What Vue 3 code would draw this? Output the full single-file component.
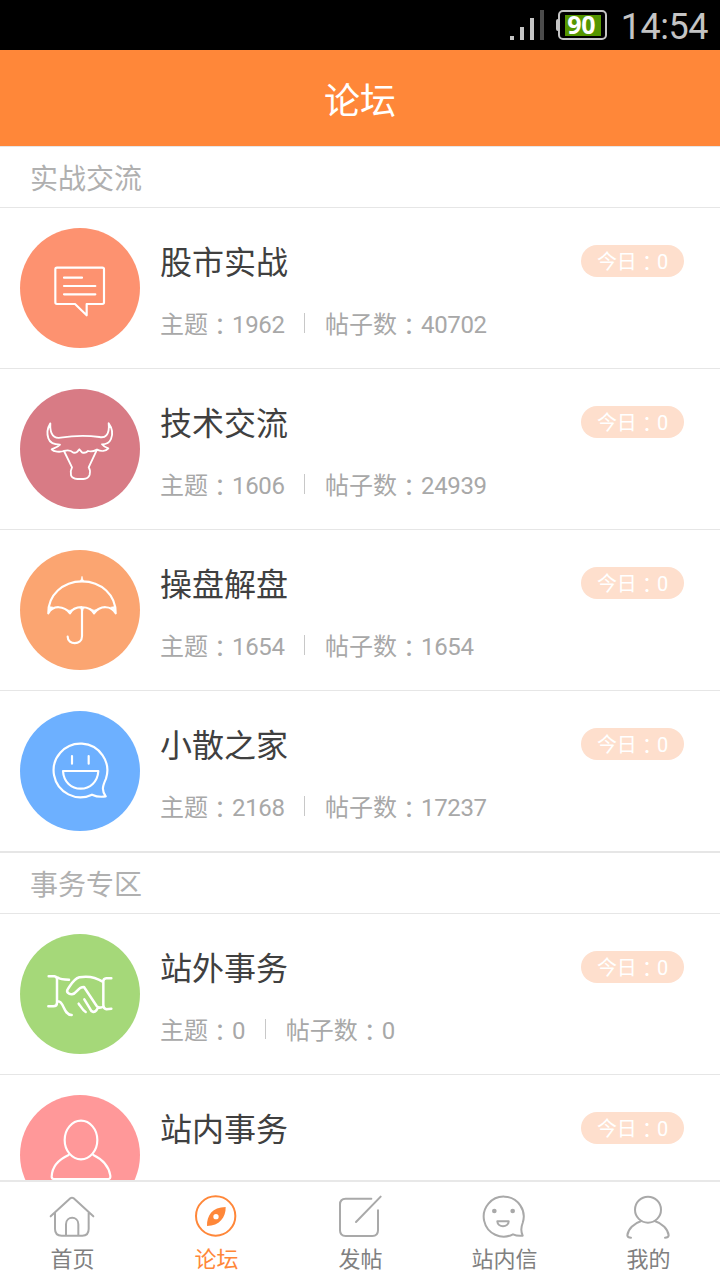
<script setup>
const sections = [
  {
    title: '实战交流',
    items: [
      { name: '股市实战', icon: 'talk', color: '#fd9270', topics: 1962, posts: 40702 },
      { name: '技术交流', icon: 'bull', color: '#d87b85', topics: 1606, posts: 24939 },
      { name: '操盘解盘', icon: 'umbrella', color: '#fba571', topics: 1654, posts: 1654 },
      { name: '小散之家', icon: 'smile', color: '#6db0ff', topics: 2168, posts: 17237 },
    ],
  },
  {
    title: '事务专区',
    items: [
      { name: '站外事务', icon: 'hands', color: '#a5d879', topics: 0, posts: 0 },
      { name: '站内事务', icon: 'person', color: '#ff9899' },
    ],
  },
]
const tabs = [
  { label: '首页', icon: 'home' },
  { label: '论坛', icon: 'forum', active: true },
  { label: '发帖', icon: 'post' },
  { label: '站内信', icon: 'mail' },
  { label: '我的', icon: 'me' },
]
</script>

<template>
  <div class="screen">
    <div class="status">
      <svg class="signal" viewBox="0 0 36 32" width="36" height="32">
        <g fill="#c4c4c4">
          <rect x="0" y="27" width="4" height="4" />
          <rect x="10" y="18" width="4" height="13" />
          <rect x="20" y="9" width="4" height="22" />
        </g>
        <rect x="30" y="1" width="4" height="30" fill="#4c4c4c" />
      </svg>
      <div class="battery"><span class="level">90</span></div>
      <span class="time">14:54</span>
    </div>

    <header class="header">论坛</header>

    <main class="list">
      <section v-for="s in sections" :key="s.title" class="section">
        <h2 class="section-title">{{ s.title }}</h2>
        <article v-for="it in s.items" :key="it.name" class="item">
          <div class="avatar" :style="{ background: it.color }">
            <svg v-if="it.icon === 'talk'" viewBox="30 24 360 360">
              <path d="M141 143H277Q282 143 282 148V247Q282 252 277 252H230V286L195 252H141Q136 252 136 247V148Q136 143 141 143ZM162 173H216M162 198H256M162 223H256" />
            </svg>
            <svg v-else-if="it.icon === 'bull'" viewBox="30 27 360 360" class="thin">
              <path d="M121 130C110 148 112 166 115 175C119 188 133 194 150 194C142 203 134 204 125 208C131 216 150 217 162 213L186 262C182 269 181 276 183 286Q186 296 202 297H220Q235 296 239 284C241 275 241 269 236 262L261 209C273 215 287 214 295 205C288 203 281 200 276 193C289 193 299 187 303 177C309 162 307 145 296 130C298 147 297 157 289 166Q282 174 268 171C230 166 190 167 152 173C138 175 129 169 125 160Q120 150 121 130Z" />
              <path d="M162 213C172 210 182 210 190 218Q196 219 202 215L208 208L216 217Q225 221 234 213Q246 217 261 209" />
            </svg>
            <svg v-else-if="it.icon === 'umbrella'" viewBox="30 30 360 360">
              <path d="M115 220C114 166 158 124 216 124S318 166 317 220C304 196 270 195 252 220C240 196 192 195 180 220C162 196 128 195 115 220ZM216 203V289C216 316 173 316 173 290" />
              <path class="solid" d="M210 124Q215 119 216 109Q217 119 222 124ZM115 220L119 200Q125 200 130 202Q120 207 115 220ZM317 220L313 200Q307 200 302 202Q312 207 317 220ZM180 220L168 207Q179 216 192 206ZM252 220L240 206Q252 215 264 207ZM216 216L212 204H220Z" />
            </svg>
            <svg v-else-if="it.icon === 'smile'" viewBox="30 33 360 360">
              <path d="M246 284A80.500 80.500 0 1 1 288 236C278 258 274 270 287 289Q266 293 246 284ZM186 168V191M236 168V191M159 213H265C263 246 240 266 212 266S161 246 159 213Z" />
            </svg>
            <svg v-else-if="it.icon === 'hands'" viewBox="30 27 360 360" class="bold">
              <path d="M116 154H133Q141 155 141 163V233Q141 244 130 244H115M144 158Q151 164 177 164M144 229C162 228 159 269 185 270M304 160H289Q280 161 280 169V240Q280 251 289 253L304 251M278 170C256 156 230 153 208 157C192 161 184 177 173 193C168 201 176 209 186 208C201 206 203 185 222 186L260 243Q265 250 275 247M206 236C212 244 217 255 227 261M223 223L240 251C244 261 252 264 259 256L264 248" />
            </svg>
            <svg v-else viewBox="30 30 360 360">
              <ellipse cx="213" cy="165" rx="49" ry="58" />
              <path d="M176 210C145 224 126 246 125 275Q125 282 133 282H295Q302 282 301 272C297 246 279 224 250 210" />
            </svg>
          </div>
          <div class="info">
            <div class="row">
              <h3 class="name">{{ it.name }}</h3>
              <span class="badge">今日<i class="colon">：</i>0</span>
            </div>
            <div v-if="it.topics !== undefined" class="meta">
              <span>主题<i class="colon">：</i><span class="num">{{ it.topics }}</span></span>
              <span class="bar"></span>
              <span>帖子数<i class="colon">：</i><span class="num">{{ it.posts }}</span></span>
            </div>
          </div>
        </article>
      </section>
    </main>

    <nav class="tabs">
      <div v-for="t in tabs" :key="t.icon" class="tab" :class="{ active: t.active }">
        <svg v-if="t.icon === 'home'" viewBox="144 66 144 144">
          <path d="M152 139L211 85Q216 81 221 85L280 139M165 128V177Q165 197 185 197H247Q266 197 266 177V128M198 197V163C198 137 235 137 235 163V197" />
        </svg>
        <svg v-else-if="t.icon === 'forum'" viewBox="576 66 144 144">
          <circle cx="647" cy="138" r="59" />
          <path class="fill" fill-rule="evenodd" d="M621 168C620 137 637 111 677 111C678 142 658 168 621 168ZM648 132A8 8 0 1 0 648 148A8 8 0 1 0 648 132Z" />
        </svg>
        <svg v-else-if="t.icon === 'post'" viewBox="1008 66 144 144">
          <path d="M1114 86H1037Q1020 86 1020 103V181Q1020 198 1037 198H1117Q1134 198 1134 181V121M1142 80L1068 156" />
        </svg>
        <svg v-else-if="t.icon === 'mail'" viewBox="360 66 144 144">
          <path d="M459 193A60 60 0 1 1 488 159C482 174 482 184 488 197Q472 199 459 193ZM412 154H446C445 174 413 174 412 154Z" />
          <circle class="fill" cx="403" cy="123" r="7" />
          <circle class="fill" cx="458" cy="123" r="7" />
        </svg>
        <svg v-else viewBox="792 66 144 144">
          <circle cx="864" cy="119" r="39" />
          <path d="M844 153C821 160 804 178 802 196Q803 203 813 203M884 153C907 160 924 178 926 196Q925 203 915 203" />
        </svg>
        <span class="label">{{ t.label }}</span>
      </div>
    </nav>
  </div>
</template>

<style>
body {
  margin: 0;
  background: #fff;
}
</style>

<style scoped>
.screen {
  width: 720px;
  height: 1280px;
  display: flex;
  flex-direction: column;
  overflow: hidden;
  background: #fff;
  font-family: Roboto, "Noto Sans CJK SC", sans-serif;
}
.status {
  flex: none;
  height: 50px;
  box-sizing: border-box;
  padding-right: 12px;
  background: #000;
  display: flex;
  justify-content: flex-end;
  align-items: center;
}
.signal {
  margin-right: 12px;
}
.battery {
  position: relative;
  box-sizing: border-box;
  width: 49px;
  height: 30px;
  margin-right: 14px;
  border: 2px solid #c4c4c4;
  border-radius: 5px;
  display: flex;
  align-items: center;
  justify-content: center;
}
.battery::before {
  content: "";
  position: absolute;
  left: -4px;
  top: 7px;
  width: 3px;
  height: 12px;
  border-radius: 2px 0 0 2px;
  background: #c4c4c4;
}
.level {
  width: 36px;
  height: 21px;
  margin-left: 2px;
  background: #559600;
  color: #fff;
  font: 700 25px/19px "Noto Sans", sans-serif;
  letter-spacing: -0.5px;
  text-indent: 2px;
}
.time {
  color: #c4c4c4;
  font-size: 36px;
  line-height: 50px;
  padding-top: 3px;
  letter-spacing: -0.5px;
}
.header {
  flex: none;
  height: 96px;
  box-sizing: border-box;
  padding-top: 3px;
  line-height: 99px;
  background: #ff8739;
  color: #fff;
  font-size: 36px;
  text-align: center;
}
.list {
  flex: 1;
  min-height: 0;
  overflow: hidden;
}
.section-title {
  margin: 0;
  padding-left: 30px;
  height: 60px;
  line-height: 66px;
  border-bottom: 1px solid #e6e6e6;
  font-size: 28px;
  font-weight: 400;
  color: #b0b0b0;
}
.section:first-child {
  border-top: 1px solid #e6e6e6;
}
.item {
  height: 160px;
  padding: 0 36px 0 20px;
  border-bottom: 1px solid #e6e6e6;
  display: flex;
  align-items: center;
  gap: 20px;
}
.item:last-child {
  border-bottom-width: 2px;
}
.avatar {
  flex: none;
  width: 120px;
  height: 120px;
  border-radius: 50%;
}
.avatar svg {
  display: block;
  width: 120px;
  height: 120px;
  fill: none;
  stroke: #fff;
  stroke-width: 6.5;
  stroke-linecap: round;
  stroke-linejoin: round;
}
.avatar svg.thin {
  stroke-width: 5.5;
}
.avatar svg.bold {
  stroke-width: 7.5;
}
.avatar .solid {
  fill: #fff;
  stroke-width: 2;
}
.info {
  flex: 1;
  height: 120px;
}
.row {
  display: flex;
  justify-content: space-between;
  align-items: flex-start;
}
.name {
  margin: 10px 0 0;
  font-size: 32px;
  line-height: 50px;
  font-weight: 400;
  color: #404040;
}
.badge {
  margin-top: 17px;
  width: 103px;
  height: 32px;
  line-height: 34px;
  border-radius: 16px;
  background: #fedfcd;
  color: #fff;
  font-size: 20px;
  text-align: center;
}
.colon {
  display: inline-block;
  transform: translateY(0.1em);
  line-height: 1;
  font-style: normal;
  font-family: "Noto Sans CJK TC", sans-serif;
}
.meta {
  margin-top: 18px;
  display: flex;
  align-items: center;
  font-size: 24px;
  line-height: 38px;
  color: #a8a8a8;
}
.num {
  letter-spacing: -0.35px;
}
.bar {
  width: 1px;
  height: 20px;
  margin: 0 20px 4px 19.5px;
  background: #c8c8c8;
}
.tabs {
  flex: none;
  height: 98px;
  border-top: 2px solid #e8e8e8;
  background: #fff;
  display: flex;
}
.tab {
  flex: 1;
  padding-top: 10px;
  display: flex;
  flex-direction: column;
  align-items: center;
  color: #a9a9a9;
}
.tab svg {
  width: 48px;
  height: 48px;
  fill: none;
  stroke: currentColor;
  stroke-width: 6;
  stroke-linecap: round;
  stroke-linejoin: round;
}
.tab .fill {
  fill: currentColor;
  stroke: none;
}
.tab.active {
  color: #ff8739;
}
.label {
  margin-top: 2px;
  padding-left: 1px;
  font-size: 22px;
  line-height: 36px;
  color: #808080;
}
.active .label {
  color: #ff8739;
}
</style>
